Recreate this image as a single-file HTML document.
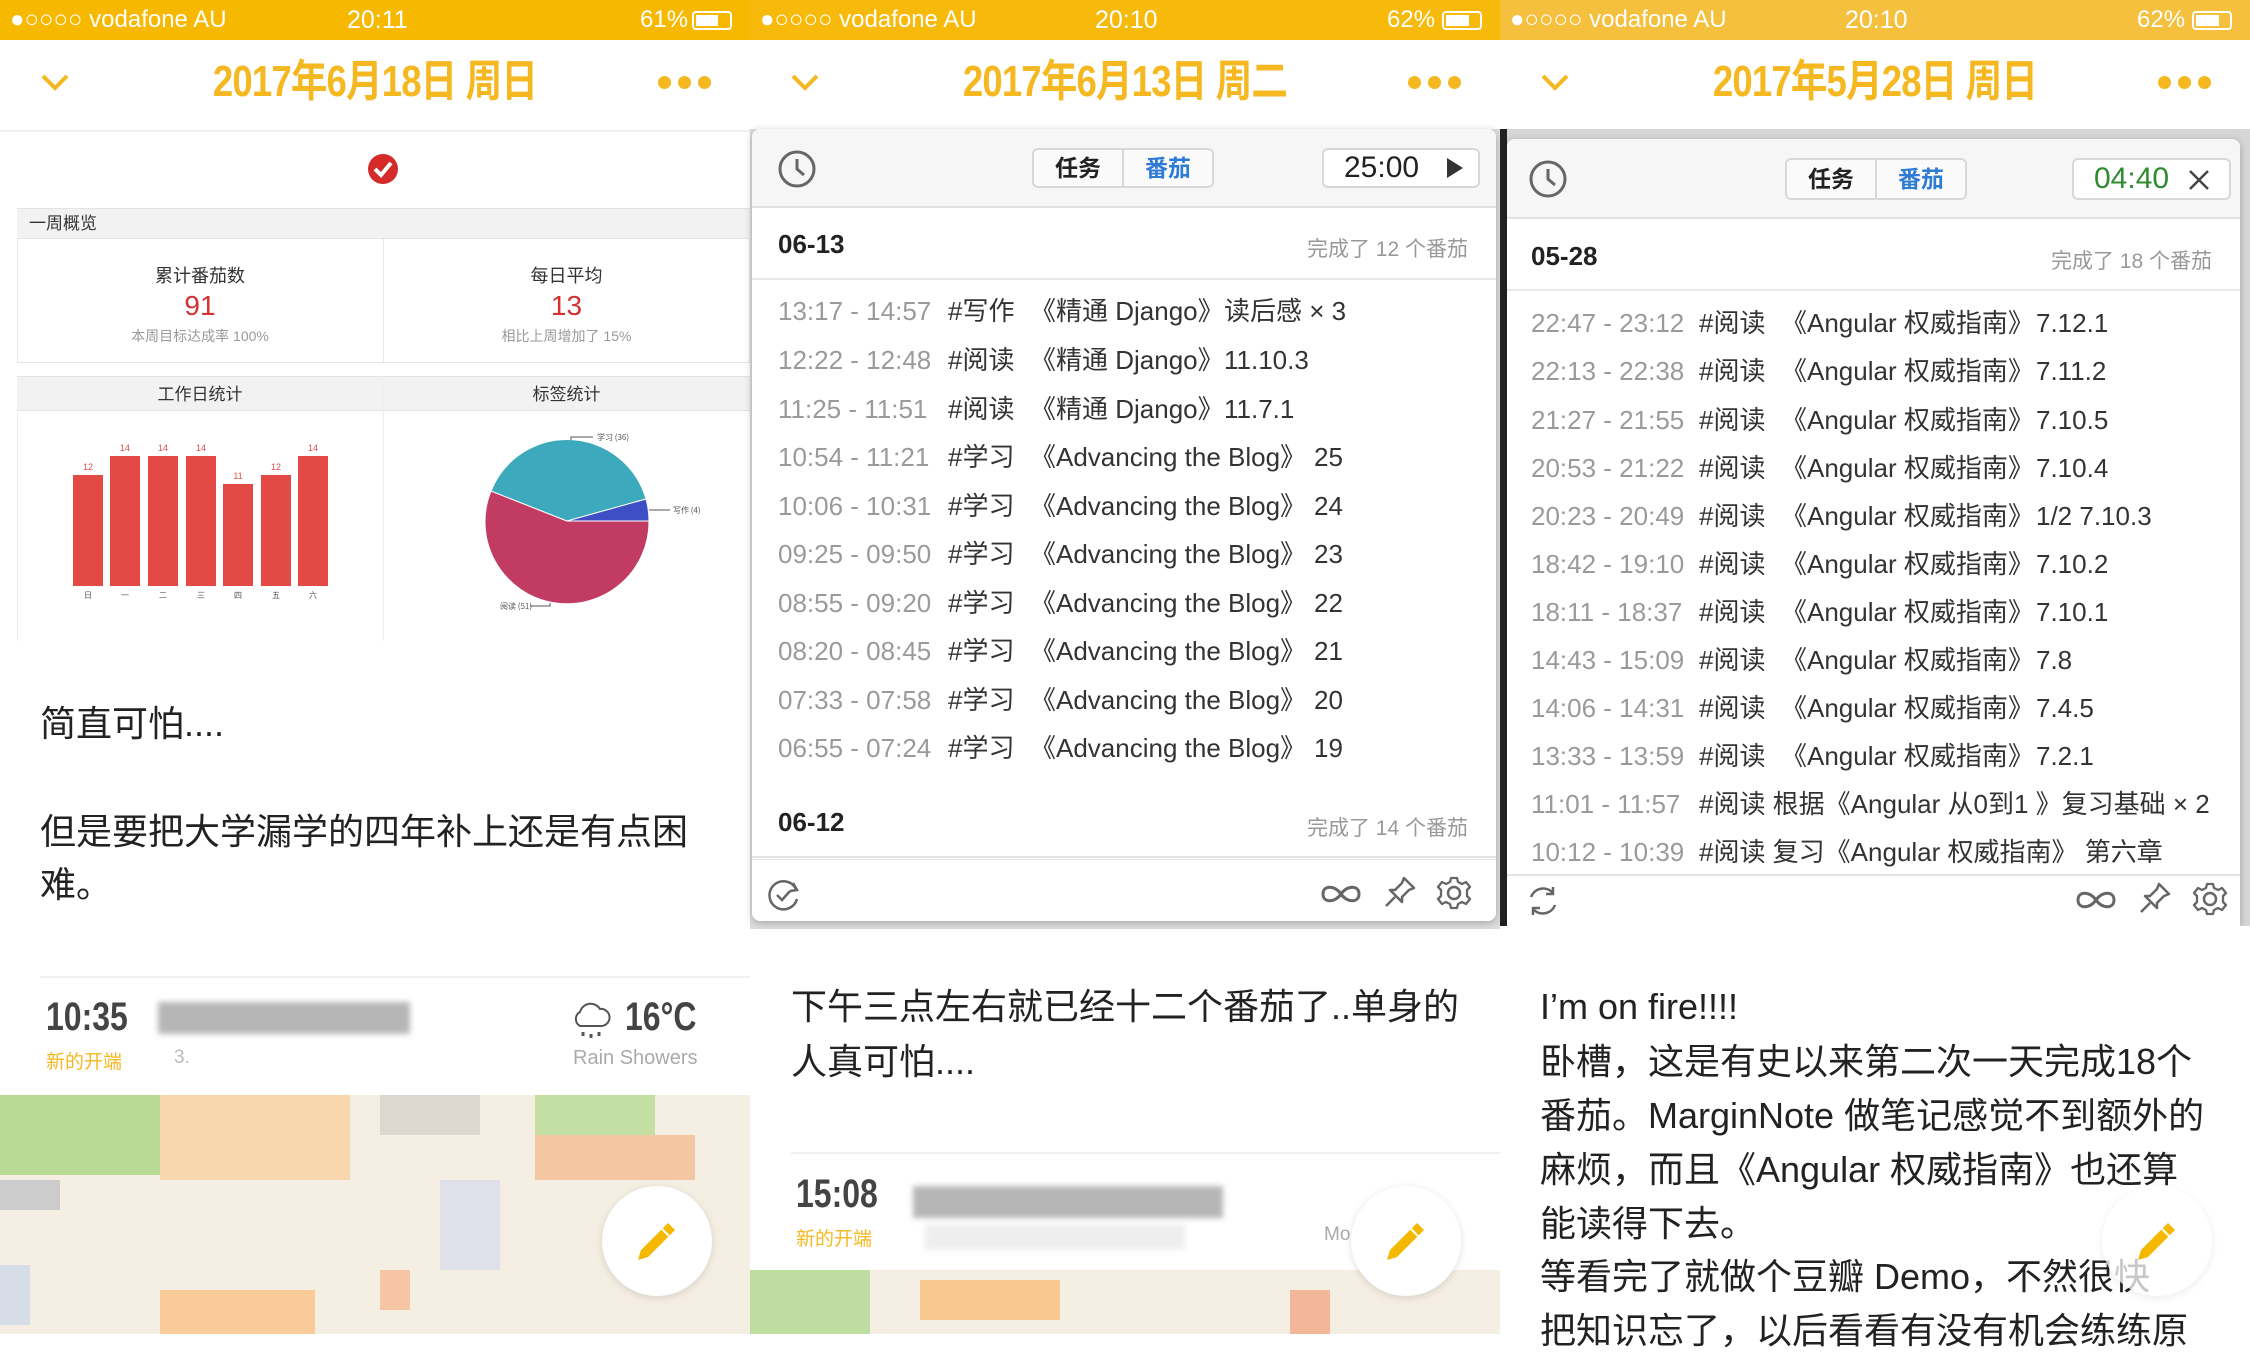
<!DOCTYPE html>
<html><head><meta charset="utf-8">
<style>
*{margin:0;padding:0;box-sizing:border-box}
body{width:2250px;height:1334px;overflow:hidden;background:#fff;position:relative;font-family:"Liberation Sans","Noto Sans CJK SC",sans-serif}
.a{position:absolute;white-space:nowrap}
.sb{position:absolute;top:0;height:40px;width:750px;color:#fff;font-size:24px;line-height:40px}
.title{position:absolute;top:56px;width:750px;text-align:center;font-family:"Liberation Sans","Noto Sans CJK SC",sans-serif;font-weight:bold;font-size:44px;color:#F5B820;letter-spacing:-1px;line-height:52px;transform:scaleX(0.83)}
.dots{position:absolute;top:76px}
.dots i{display:inline-block;width:13px;height:13px;border-radius:50%;background:#F5B820;margin-right:7px}
.row{position:absolute;font-size:26px;line-height:34px;color:#333;white-space:nowrap}
.row .t{position:absolute;left:0;color:#9a9a9a}
.row span{position:absolute}
.pop{position:absolute;background:#fff;border-radius:8px;box-shadow:0 2px 8px rgba(0,0,0,.25);overflow:hidden}
.seg{position:absolute;border:2px solid #d8d8d8;border-radius:6px;background:#fafafa;display:flex;font-size:23px;font-weight:bold}
.seg div{flex:1;text-align:center}
.body{position:absolute;font-size:36px;color:#222;line-height:54px;white-space:nowrap}
.cond{transform:scaleX(0.8);transform-origin:left center}
</style></head><body>

<!-- STATUS BARS -->
<div class="sb" style="left:0;background:#F7B900"><span class="a" style="left:10px">●○○○○ vodafone AU</span><span class="a" style="left:347px;font-size:25px">20:11</span><span class="a" style="left:640px">61%</span><span class="a" style="left:692px;top:11px;width:40px;height:19px;border:2px solid #fff;border-radius:4px"><i style="position:absolute;left:2px;top:2px;width:22px;height:11px;background:#fff"></i></span></div>
<div class="sb" style="left:750px;background:#F7BA0A"><span class="a" style="left:10px">●○○○○ vodafone AU</span><span class="a" style="left:345px;font-size:25px">20:10</span><span class="a" style="left:637px">62%</span><span class="a" style="left:692px;top:11px;width:40px;height:19px;border:2px solid #fff;border-radius:4px"><i style="position:absolute;left:2px;top:2px;width:23px;height:11px;background:#fff"></i></span></div>
<div class="sb" style="left:1500px;background:#F4C03E"><span class="a" style="left:10px">●○○○○ vodafone AU</span><span class="a" style="left:345px;font-size:25px">20:10</span><span class="a" style="left:637px">62%</span><span class="a" style="left:692px;top:11px;width:40px;height:19px;border:2px solid #fff;border-radius:4px"><i style="position:absolute;left:2px;top:2px;width:23px;height:11px;background:#fff"></i></span></div>

<!-- NAV BARS -->
<svg class="a" style="left:40px;top:72px" width="30" height="20"><path d="M3 4 L15 16 L27 4" stroke="#F5B820" stroke-width="4" fill="none"/></svg>
<div class="title" style="left:0">2017年6月18日 周日</div>
<div class="dots" style="left:658px"><i></i><i></i><i></i></div>
<svg class="a" style="left:790px;top:72px" width="30" height="20"><path d="M3 4 L15 16 L27 4" stroke="#F5B820" stroke-width="4" fill="none"/></svg>
<div class="title" style="left:750px">2017年6月13日 周二</div>
<div class="dots" style="left:1408px"><i></i><i></i><i></i></div>
<svg class="a" style="left:1540px;top:72px" width="30" height="20"><path d="M3 4 L15 16 L27 4" stroke="#F5B820" stroke-width="4" fill="none"/></svg>
<div class="title" style="left:1500px">2017年5月28日 周日</div>
<div class="dots" style="left:2158px"><i></i><i></i><i></i></div>

<!-- PANEL 1 -->
<div class="a" style="left:0;top:130px;width:750px;height:2px;background:#f1f1f1"></div>
<svg class="a" style="left:367px;top:153px" width="32" height="32"><circle cx="16" cy="16" r="15" fill="#D42A2A"/><path d="M8 16 L14 22 L24 10" stroke="#fff" stroke-width="4" fill="none"/></svg>
<div class="a" style="left:17px;top:208px;width:733px;height:31px;background:#f2f2f2;border-top:1px solid #e4e4e4;border-bottom:1px solid #e4e4e4;font-size:17px;line-height:30px;padding-left:12px;color:#333">一周概览</div>
<div class="a" style="left:17px;top:239px;width:733px;height:124px;border:1px solid #e6e6e6;border-top:0"></div>
<div class="a" style="left:383px;top:239px;width:1px;height:124px;background:#e6e6e6"></div>
<div class="a" style="left:17px;top:262px;width:366px;text-align:center;font-size:18px;color:#333">累计番茄数</div>
<div class="a" style="left:17px;top:290px;width:366px;text-align:center;font-size:28px;color:#D43030">91</div>
<div class="a" style="left:17px;top:326px;width:366px;text-align:center;font-size:14px;color:#999">本周目标达成率 100%</div>
<div class="a" style="left:383px;top:262px;width:367px;text-align:center;font-size:18px;color:#333">每日平均</div>
<div class="a" style="left:383px;top:290px;width:367px;text-align:center;font-size:28px;color:#D43030">13</div>
<div class="a" style="left:383px;top:326px;width:367px;text-align:center;font-size:14px;color:#999">相比上周增加了 15%</div>
<div class="a" style="left:17px;top:376px;width:733px;height:35px;background:#f2f2f2;border-top:1px solid #e4e4e4;border-bottom:1px solid #e4e4e4"></div>
<div class="a" style="left:17px;top:380px;width:366px;text-align:center;font-size:17px;color:#333">工作日统计</div>
<div class="a" style="left:383px;top:380px;width:367px;text-align:center;font-size:17px;color:#333">标签统计</div>
<div class="a" style="left:383px;top:376px;width:1px;height:265px;background:#eee"></div>
<div class="a" style="left:17px;top:411px;width:1px;height:230px;background:#eee"></div>
<svg class="a" style="left:0;top:0" width="750" height="650">
<g fill="#E34A45">
<rect x="73" y="475" width="30" height="111"/><rect x="110" y="456" width="30" height="130"/><rect x="148" y="456" width="30" height="130"/><rect x="186" y="456" width="30" height="130"/><rect x="223" y="484" width="30" height="102"/><rect x="261" y="475" width="30" height="111"/><rect x="298" y="456" width="30" height="130"/></g>
<g fill="#E34A45" font-size="9" text-anchor="middle" font-family="Liberation Sans"><text x="88" y="470">12</text><text x="125" y="451">14</text><text x="163" y="451">14</text><text x="201" y="451">14</text><text x="238" y="479">11</text><text x="276" y="470">12</text><text x="313" y="451">14</text></g>
<g fill="#555" font-size="8" text-anchor="middle" font-family="Noto Sans CJK SC"><text x="88" y="598">日</text><text x="125" y="598">一</text><text x="163" y="598">二</text><text x="201" y="598">三</text><text x="238" y="598">四</text><text x="276" y="598">五</text><text x="313" y="598">六</text></g>
<path d="M567 521 L649 521 A82 82 0 1 1 491 491 Z" fill="#C23B62" stroke="#fff"/>
<path d="M567 521 L491 491 A82 82 0 0 1 646 499 Z" fill="#3DA9BC" stroke="#fff"/>
<path d="M567 521 L646 499 A82 82 0 0 1 649 521 Z" fill="#3E4FC6" stroke="#fff"/>
<g stroke="#555" fill="none"><path d="M571 440 V437 H593"/><path d="M649 510 H670"/><path d="M550 603 V606 H530"/></g>
<g fill="#555" font-size="8" font-family="Noto Sans CJK SC"><text x="597" y="440">学习 (36)</text><text x="673" y="513">写作 (4)</text><text x="500" y="609">阅读 (51)</text></g>
</svg>
<div class="body" style="left:40px;top:697px">简直可怕....</div>
<div class="body" style="left:40px;top:805px">但是要把大学漏学的四年补上还是有点困</div>
<div class="body" style="left:40px;top:858px">难。</div>
<div class="a" style="left:40px;top:976px;width:710px;height:2px;background:#f0f0f0"></div>
<div class="a cond" style="left:46px;top:995px;font-weight:bold;font-size:40px;color:#444">10:35</div>
<div class="a" style="left:46px;top:1047px;font-size:19px;color:#F5B820">新的开端</div>
<div class="a" style="left:158px;top:1002px;width:252px;height:32px;background:#aaa;filter:blur(3px);opacity:.85"></div>
<div class="a" style="left:174px;top:1047px;font-size:19px;color:#bbb">3.</div>
<svg class="a" style="left:570px;top:1000px" width="42" height="48"><path d="M10 26 A8 8 0 0 1 10 12 A11 11 0 0 1 30 9 A8 8 0 0 1 32 26 Z" stroke="#555" stroke-width="2" fill="none"/><path d="M13 32v4M21 34v4M29 32v4" stroke="#555" stroke-width="3"/></svg>
<div class="a cond" style="left:625px;top:995px;font-weight:bold;font-size:40px;color:#444">16°C</div>
<div class="a" style="left:573px;top:1047px;font-size:20px;color:#aaa">Rain Showers</div>

<!-- MAPS -->
<div class="a" style="left:0;top:1095px;width:750px;height:239px;background:#F5EEE2;overflow:hidden">
<div class="a" style="left:0;top:0;width:160px;height:80px;background:#B7DB95"></div>
<div class="a" style="left:535px;top:0;width:120px;height:40px;background:#C3DFA3"></div>
<div class="a" style="left:160px;top:0;width:190px;height:85px;background:#F8D6AE"></div>
<div class="a" style="left:380px;top:0;width:100px;height:40px;background:#dcd8d0"></div>
<div class="a" style="left:535px;top:40px;width:160px;height:45px;background:#F5C6A2"></div>
<div class="a" style="left:0;top:85px;width:60px;height:30px;background:#ccc"></div>
<div class="a" style="left:440px;top:85px;width:60px;height:90px;background:#E0E0EA"></div>
<div class="a" style="left:160px;top:195px;width:155px;height:45px;background:#F9CB98"></div>
<div class="a" style="left:380px;top:175px;width:30px;height:40px;background:#F6C6A4"></div>
<div class="a" style="left:0;top:170px;width:30px;height:60px;background:#d6dde6"></div>
</div>
<div class="a" style="left:750px;top:1270px;width:750px;height:64px;background:#F5EEE2;overflow:hidden">
<div class="a" style="left:0;top:0;width:120px;height:64px;background:#BFDDA0"></div>
<div class="a" style="left:170px;top:10px;width:140px;height:40px;background:#F8C890"></div>
<div class="a" style="left:540px;top:20px;width:40px;height:44px;background:#F2B799"></div>
</div>

<!-- pencil buttons -->
<div class="a" style="left:602px;top:1186px;width:110px;height:110px;border-radius:50%;background:#fff;box-shadow:0 2px 8px rgba(0,0,0,.12)"></div>
<div class="a" style="left:1351px;top:1186px;width:110px;height:110px;border-radius:50%;background:#fff;box-shadow:0 2px 8px rgba(0,0,0,.12)"></div>
<svg class="a" style="left:632px;top:1216px" width="50" height="50"><path d="M6 44 L9 34 L36 7 L43 14 L16 41 Z" fill="#F5B800"/><path d="M30 13 L37 20" stroke="#fff" stroke-width="2"/></svg>
<svg class="a" style="left:1381px;top:1216px" width="50" height="50"><path d="M6 44 L9 34 L36 7 L43 14 L16 41 Z" fill="#F5B800"/><path d="M30 13 L37 20" stroke="#fff" stroke-width="2"/></svg>

<!-- PANEL 2 -->
<div class="a" style="left:750px;top:129px;width:750px;height:800px;background:#ddd"></div>
<div class="pop" style="left:752px;top:129px;width:744px;height:792px">
 <div class="a" style="left:0;top:0;width:744px;height:79px;background:#f6f6f6;border-bottom:2px solid #e2e2e2"></div>
 <svg class="a" style="left:25px;top:20px" width="40" height="40"><circle cx="20" cy="20" r="17" stroke="#666" stroke-width="3" fill="none"/><path d="M20 10 V20 L27 26" stroke="#666" stroke-width="3" fill="none"/></svg>
 <div class="seg" style="left:280px;top:19px;width:182px;height:40px"><div style="line-height:36px;color:#222;border-right:2px solid #d8d8d8">任务</div><div style="line-height:36px;color:#2E7BD6">番茄</div></div>
 <div class="a" style="left:570px;top:19px;width:158px;height:40px;border:2px solid #d8d8d8;border-radius:6px;background:#fff;font-size:30px;line-height:36px;padding-left:20px;color:#222">25:00</div>
 <svg class="a" style="left:693px;top:28px" width="20" height="22"><path d="M2 1 L18 11 L2 21 Z" fill="#333"/></svg>
 <div class="a" style="left:26px;top:100px;font-size:26px;font-weight:bold;color:#222">06-13</div>
 <div class="a" style="right:28px;top:104px;font-size:21px;color:#999">完成了 12 个番茄</div>
 <div class="a" style="left:0;top:149px;width:744px;height:2px;background:#e8e8e8"></div>
 <div class="row" style="left:26px;top:165px;width:700px"><span class="t">13:17 - 14:57</span><span style="left:170px">#写作</span><span style="left:252px">《精通 Django》</span><span style="left:446px">读后感 × 3</span></div>
 <div class="row" style="left:26px;top:214px;width:700px"><span class="t">12:22 - 12:48</span><span style="left:170px">#阅读</span><span style="left:252px">《精通 Django》</span><span style="left:446px">11.10.3</span></div>
 <div class="row" style="left:26px;top:263px;width:700px"><span class="t">11:25 - 11:51</span><span style="left:170px">#阅读</span><span style="left:252px">《精通 Django》</span><span style="left:446px">11.7.1</span></div>
 <div class="row" style="left:26px;top:311px;width:700px"><span class="t">10:54 - 11:21</span><span style="left:170px">#学习</span><span style="left:252px">《Advancing the Blog》</span><span style="left:536px">25</span></div>
 <div class="row" style="left:26px;top:360px;width:700px"><span class="t">10:06 - 10:31</span><span style="left:170px">#学习</span><span style="left:252px">《Advancing the Blog》</span><span style="left:536px">24</span></div>
 <div class="row" style="left:26px;top:408px;width:700px"><span class="t">09:25 - 09:50</span><span style="left:170px">#学习</span><span style="left:252px">《Advancing the Blog》</span><span style="left:536px">23</span></div>
 <div class="row" style="left:26px;top:457px;width:700px"><span class="t">08:55 - 09:20</span><span style="left:170px">#学习</span><span style="left:252px">《Advancing the Blog》</span><span style="left:536px">22</span></div>
 <div class="row" style="left:26px;top:505px;width:700px"><span class="t">08:20 - 08:45</span><span style="left:170px">#学习</span><span style="left:252px">《Advancing the Blog》</span><span style="left:536px">21</span></div>
 <div class="row" style="left:26px;top:554px;width:700px"><span class="t">07:33 - 07:58</span><span style="left:170px">#学习</span><span style="left:252px">《Advancing the Blog》</span><span style="left:536px">20</span></div>
 <div class="row" style="left:26px;top:602px;width:700px"><span class="t">06:55 - 07:24</span><span style="left:170px">#学习</span><span style="left:252px">《Advancing the Blog》</span><span style="left:536px">19</span></div>
 <div class="a" style="left:26px;top:678px;font-size:26px;font-weight:bold;color:#222">06-12</div>
 <div class="a" style="right:28px;top:683px;font-size:21px;color:#999">完成了 14 个番茄</div>
 <div class="a" style="left:0;top:727px;width:744px;height:4px;border-top:2px solid #e4e4e4;border-bottom:1px solid #e8e8e8"></div>
 <svg class="a" style="left:14px;top:748px" width="36" height="36"><path d="M30 12 A14 14 0 1 0 31 22" stroke="#666" stroke-width="2.5" fill="none"/><path d="M27 6 L31 13 L24 14" stroke="#666" stroke-width="2.5" fill="none"/><path d="M11 18 L16 23 L24 14" stroke="#666" stroke-width="2.5" fill="none"/></svg>
 <svg class="a" style="left:568px;top:752px" width="42" height="26"><path d="M21 13 C15 4 3 4 3 13 C3 22 15 22 21 13 C27 4 39 4 39 13 C39 22 27 22 21 13Z" stroke="#666" stroke-width="3" fill="none"/></svg>
 <svg class="a" style="left:630px;top:745px" width="36" height="36"><path d="M22 4 L32 14 L27 16 L20 23 L20 28 L8 16 L13 16 L20 9 Z M13 23 L4 32" stroke="#666" stroke-width="2.5" fill="none" stroke-linejoin="round"/></svg>
 <svg class="a" style="left:684px;top:746px" width="36" height="36"><circle cx="18" cy="18" r="6" stroke="#666" stroke-width="2.5" fill="none"/><path d="M15 3h6l1 4 4 2 4-2 4 5-3 3v6l3 3-4 5-4-2-4 2-1 4h-6l-1-4-4-2-4 2-4-5 3-3v-6l-3-3 4-5 4 2 4-2z" stroke="#666" stroke-width="2.3" fill="none" stroke-linejoin="round"/></svg>
</div>
<div class="a" style="left:750px;top:929px;width:750px;height:260px;background:#fff;z-index:-1"></div>
<div class="body" style="left:791px;top:980px">下午三点左右就已经十二个番茄了..单身的</div>
<div class="body" style="left:791px;top:1035px">人真可怕....</div>
<div class="a" style="left:791px;top:1152px;width:709px;height:2px;background:#f0f0f0"></div>
<div class="a cond" style="left:796px;top:1172px;font-weight:bold;font-size:40px;color:#444">15:08</div>
<div class="a" style="left:796px;top:1224px;font-size:19px;color:#F5B820">新的开端</div>
<div class="a" style="left:913px;top:1186px;width:310px;height:32px;background:#aaa;filter:blur(3px);opacity:.85"></div>
<div class="a" style="left:925px;top:1224px;width:260px;height:26px;background:#eee;filter:blur(3px)"></div>
<div class="a" style="left:1324px;top:1224px;font-size:19px;color:#aaa">Mo</div>

<!-- PANEL 3 -->
<div class="a" style="left:1500px;top:129px;width:750px;height:800px;background:#d6d6d6"></div>
<div class="a" style="left:1500px;top:129px;width:7px;height:800px;background:#222"></div>
<div class="pop" style="left:1507px;top:139px;width:733px;height:787px;border-radius:8px 8px 0 0">
 <div class="a" style="left:0;top:0;width:733px;height:80px;background:#f6f6f6;border-bottom:2px solid #e2e2e2"></div>
 <svg class="a" style="left:21px;top:20px" width="40" height="40"><circle cx="20" cy="20" r="17" stroke="#666" stroke-width="3" fill="none"/><path d="M20 10 V20 L27 26" stroke="#666" stroke-width="3" fill="none"/></svg>
 <div class="seg" style="left:278px;top:19px;width:182px;height:42px"><div style="line-height:38px;color:#222;border-right:2px solid #d8d8d8">任务</div><div style="line-height:38px;color:#2E7BD6">番茄</div></div>
 <div class="a" style="left:565px;top:19px;width:159px;height:42px;border:2px solid #d8d8d8;border-radius:6px;background:#fff;font-size:30px;line-height:38px;padding-left:20px;color:#2E8B2E">04:40</div>
 <svg class="a" style="left:681px;top:30px" width="22" height="22"><path d="M2 2 L20 20 M20 2 L2 20" stroke="#444" stroke-width="2.5"/></svg>
 <div class="a" style="left:24px;top:102px;font-size:26px;font-weight:bold;color:#222">05-28</div>
 <div class="a" style="right:28px;top:106px;font-size:21px;color:#999">完成了 18 个番茄</div>
 <div class="a" style="left:0;top:150px;width:733px;height:2px;background:#e8e8e8"></div>
 <div class="row" style="left:24px;top:167px;width:700px"><span class="t">22:47 - 23:12</span><span style="left:168px">#阅读</span><span style="left:250px">《Angular 权威指南》</span><span style="left:505px">7.12.1</span></div>
 <div class="row" style="left:24px;top:215px;width:700px"><span class="t">22:13 - 22:38</span><span style="left:168px">#阅读</span><span style="left:250px">《Angular 权威指南》</span><span style="left:505px">7.11.2</span></div>
 <div class="row" style="left:24px;top:264px;width:700px"><span class="t">21:27 - 21:55</span><span style="left:168px">#阅读</span><span style="left:250px">《Angular 权威指南》</span><span style="left:505px">7.10.5</span></div>
 <div class="row" style="left:24px;top:312px;width:700px"><span class="t">20:53 - 21:22</span><span style="left:168px">#阅读</span><span style="left:250px">《Angular 权威指南》</span><span style="left:505px">7.10.4</span></div>
 <div class="row" style="left:24px;top:360px;width:700px"><span class="t">20:23 - 20:49</span><span style="left:168px">#阅读</span><span style="left:250px">《Angular 权威指南》</span><span style="left:505px">1/2 7.10.3</span></div>
 <div class="row" style="left:24px;top:408px;width:700px"><span class="t">18:42 - 19:10</span><span style="left:168px">#阅读</span><span style="left:250px">《Angular 权威指南》</span><span style="left:505px">7.10.2</span></div>
 <div class="row" style="left:24px;top:456px;width:700px"><span class="t">18:11 - 18:37</span><span style="left:168px">#阅读</span><span style="left:250px">《Angular 权威指南》</span><span style="left:505px">7.10.1</span></div>
 <div class="row" style="left:24px;top:504px;width:700px"><span class="t">14:43 - 15:09</span><span style="left:168px">#阅读</span><span style="left:250px">《Angular 权威指南》</span><span style="left:505px">7.8</span></div>
 <div class="row" style="left:24px;top:552px;width:700px"><span class="t">14:06 - 14:31</span><span style="left:168px">#阅读</span><span style="left:250px">《Angular 权威指南》</span><span style="left:505px">7.4.5</span></div>
 <div class="row" style="left:24px;top:600px;width:700px"><span class="t">13:33 - 13:59</span><span style="left:168px">#阅读</span><span style="left:250px">《Angular 权威指南》</span><span style="left:505px">7.2.1</span></div>
 <div class="row" style="left:24px;top:648px;width:700px"><span class="t">11:01 - 11:57</span><span style="left:168px">#阅读 根据《Angular 从0到1 》复习基础 × 2</span></div>
 <div class="row" style="left:24px;top:696px;width:700px"><span class="t">10:12 - 10:39</span><span style="left:168px">#阅读 复习《Angular 权威指南》 第六章</span></div>
 <div class="a" style="left:0;top:735px;width:733px;height:52px;background:#fff;border-top:2px solid #e4e4e4"></div>
 <svg class="a" style="left:18px;top:744px" width="36" height="36"><path d="M28 10 A13 13 0 0 0 6 14 M8 26 A13 13 0 0 0 30 22" stroke="#666" stroke-width="2.5" fill="none"/><path d="M28 4 V11 H21 M8 32 V25 H15" stroke="#666" stroke-width="2.5" fill="none"/></svg>
 <svg class="a" style="left:568px;top:748px" width="42" height="26"><path d="M21 13 C15 4 3 4 3 13 C3 22 15 22 21 13 C27 4 39 4 39 13 C39 22 27 22 21 13Z" stroke="#666" stroke-width="3" fill="none"/></svg>
 <svg class="a" style="left:630px;top:741px" width="36" height="36"><path d="M22 4 L32 14 L27 16 L20 23 L20 28 L8 16 L13 16 L20 9 Z M13 23 L4 32" stroke="#666" stroke-width="2.5" fill="none" stroke-linejoin="round"/></svg>
 <svg class="a" style="left:685px;top:742px" width="36" height="36"><circle cx="18" cy="18" r="6" stroke="#666" stroke-width="2.5" fill="none"/><path d="M15 3h6l1 4 4 2 4-2 4 5-3 3v6l3 3-4 5-4-2-4 2-1 4h-6l-1-4-4-2-4 2-4-5 3-3v-6l-3-3 4-5 4 2 4-2z" stroke="#666" stroke-width="2.3" fill="none" stroke-linejoin="round"/></svg>
</div>
<div class="a" style="left:1500px;top:926px;width:750px;height:408px;background:#fff"></div>
<div class="body" style="left:1540px;top:980px">I’m on fire!!!!</div>
<div class="body" style="left:1540px;top:1035px">卧槽，这是有史以来第二次一天完成18个</div>
<div class="body" style="left:1540px;top:1089px">番茄。MarginNote 做笔记感觉不到额外的</div>
<div class="body" style="left:1540px;top:1143px">麻烦，而且《Angular 权威指南》也还算</div>
<div class="body" style="left:1540px;top:1197px">能读得下去。</div>
<div class="body" style="left:1540px;top:1250px">等看完了就做个豆瓣 Demo，不然很快</div>
<div class="body" style="left:1540px;top:1304px">把知识忘了，以后看看有没有机会练练原</div>
<div class="a" style="left:2102px;top:1186px;width:110px;height:110px;border-radius:50%;background:rgba(255,255,255,.75);box-shadow:0 2px 8px rgba(0,0,0,.08)"></div>
<svg class="a" style="left:2132px;top:1216px" width="50" height="50"><path d="M6 44 L9 34 L36 7 L43 14 L16 41 Z" fill="#F5B800"/><path d="M30 13 L37 20" stroke="#fff" stroke-width="2"/></svg>
</body></html>
